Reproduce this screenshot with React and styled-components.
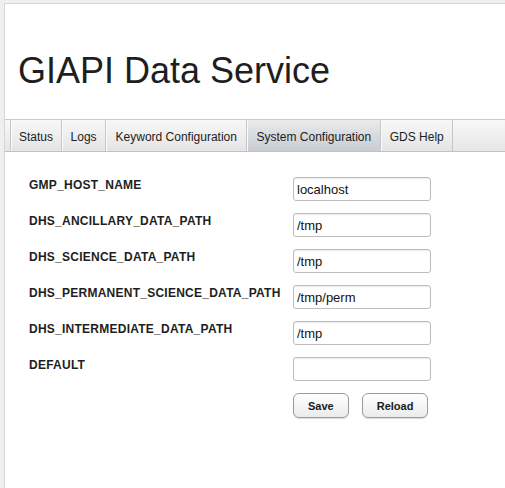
import React from 'react';
import styled, { createGlobalStyle } from 'styled-components';

const GlobalStyle = createGlobalStyle`
  html, body {
    margin: 0;
    padding: 0;
    background: #efefef;
    font-family: "Liberation Sans", Arial, sans-serif;
  }
`;

const Page = styled.div`
  margin: 3px 0 0 4px;
  min-height: 485px;
  background: #fff;
  border-top: 1px solid #d6d6d6;
  border-left: 1px solid #d6d6d6;
`;

const Header = styled.header`
  height: 115px;
  box-sizing: border-box;
  padding: 46px 0 0 13px;
`;

const Title = styled.h1`
  margin: 0;
  font-size: 36px;
  font-weight: normal;
  color: #1e1e1e;
`;

const TabBar = styled.nav`
  display: flex;
  height: 31px;
  border-top: 1px solid #c9c9c9;
  border-bottom: 1px solid #c2c2c2;
  background: linear-gradient(#f8f8f8, #e6e6e6);
`;

const Spacer = styled.div`
  width: 5px;
  border-right: 1px solid #c6c6c6;
`;

const Tab = styled.div`
  display: flex;
  align-items: center;
  padding: 2px ${p => p.$pad}px 0;
  font-size: 12px;
  color: #1d1d1d;
  border-right: 1px solid #c6c6c6;
  box-shadow: inset 1px 0 0 #fbfbfb;
  background: ${p =>
    p.$active ? 'linear-gradient(#e9ebed, #c8ccd0)' : 'linear-gradient(#f8f8f8, #e4e4e4)'};
`;

const Form = styled.div`
  display: grid;
  grid-template-columns: 264px 138px;
  row-gap: 12px;
  padding: 25px 0 0 24px;
`;

const Label = styled.div`
  font-size: 12px;
  font-weight: bold;
  letter-spacing: 0.25px;
  color: #1e1e1e;
  padding-top: 1px;
  line-height: 15px;
`;

const Input = styled.input`
  box-sizing: border-box;
  width: 138px;
  height: 24px;
  margin: 0;
  padding: 0 3px;
  border: 1px solid #bdbdbd;
  border-radius: 3px;
  box-shadow: inset 0 1px 1px rgba(0, 0, 0, 0.08);
  font-family: "Liberation Sans", Arial, sans-serif;
  font-size: 13px;
  color: #111;
  outline: none;
`;

const Buttons = styled.div`
  grid-column: 2;
  display: flex;
  gap: 13px;
`;

const Button = styled.button`
  height: 25px;
  padding: 0 14px;
  border: 1px solid #9c9c9c;
  border-radius: 6px;
  background: linear-gradient(#ffffff, #ebebeb);
  box-shadow: 0 1px 1px rgba(0, 0, 0, 0.15);
  font-family: "Liberation Sans", Arial, sans-serif;
  font-size: 11px;
  font-weight: bold;
  color: #1b1b1b;
`;

const tabs = [
  { name: 'Status', pad: 8 },
  { name: 'Logs', pad: 8.5 },
  { name: 'Keyword Configuration', pad: 9.5 },
  { name: 'System Configuration', pad: 9, active: true },
  { name: 'GDS Help', pad: 8.5 },
];

const fields = [
  ['GMP_HOST_NAME', 'localhost'],
  ['DHS_ANCILLARY_DATA_PATH', '/tmp'],
  ['DHS_SCIENCE_DATA_PATH', '/tmp'],
  ['DHS_PERMANENT_SCIENCE_DATA_PATH', '/tmp/perm'],
  ['DHS_INTERMEDIATE_DATA_PATH', '/tmp'],
  ['DEFAULT', ''],
];

export default function App() {
  return (
    <>
      <GlobalStyle />
      <Page>
        <Header>
          <Title>GIAPI Data Service</Title>
        </Header>
        <TabBar>
          <Spacer />
          {tabs.map(t => (
            <Tab key={t.name} $pad={t.pad} $active={t.active}>
              {t.name}
            </Tab>
          ))}
        </TabBar>
        <Form>
          {fields.map(([label, value]) => (
            <React.Fragment key={label}>
              <Label>{label}</Label>
              <Input defaultValue={value} />
            </React.Fragment>
          ))}
          <Buttons>
            <Button>Save</Button>
            <Button>Reload</Button>
          </Buttons>
        </Form>
      </Page>
    </>
  );
}
